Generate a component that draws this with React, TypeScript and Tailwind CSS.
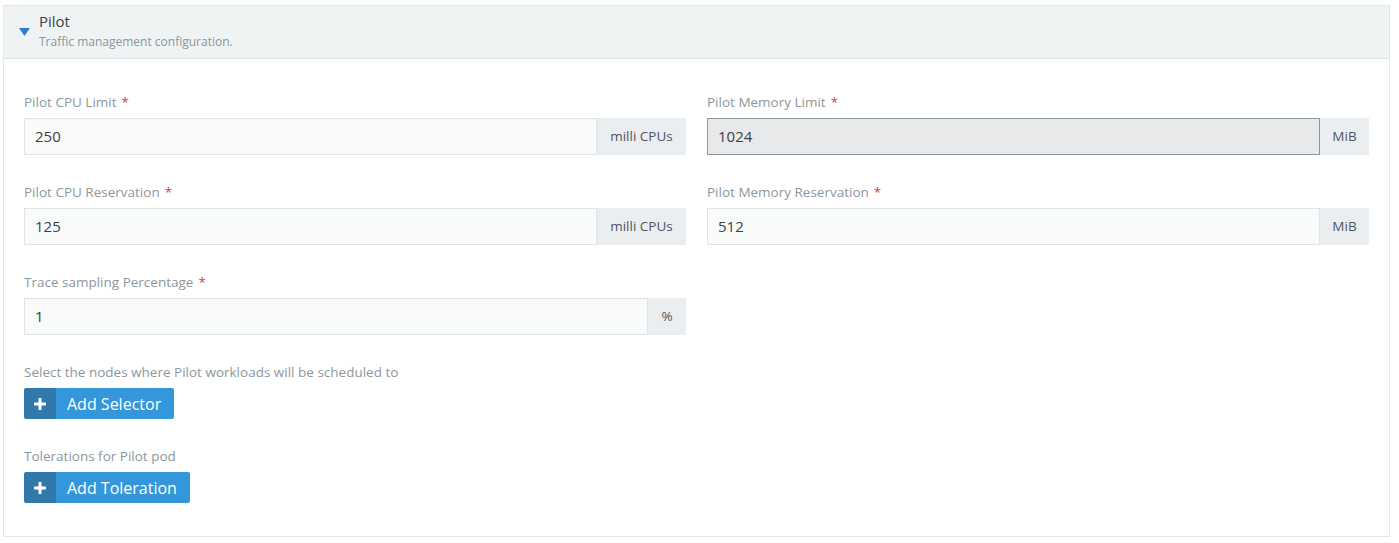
const Label = ({ text, required }: { text: string; required?: boolean }) => (
  <div className="h-[16px] mb-[8px] text-[13.5px] leading-[16px] text-[#8c979d]">
    {text}
    {required && <span className="ml-[5px] text-[#e0353d]">*</span>}
  </div>
);

const Field = ({
  label,
  value,
  addon,
  addonWidth,
  disabled,
}: {
  label: string;
  value: string;
  addon: string;
  addonWidth: string;
  disabled?: boolean;
}) => (
  <div>
    <Label text={label} required />
    <div className="flex h-[37px]">
      <input
        readOnly
        value={value}
        className={`flex-1 min-w-0 px-[10px] text-[15px] text-[#3c4047] outline-none border ${
          disabled ? 'bg-[#e8e9eb] border-[#8e979c]' : 'bg-[#f9fbfb] border-[#dfe4e6]'
        }`}
      />
      <div
        className={`${addonWidth} flex items-center justify-center bg-[#ebeef0] text-[13.5px] text-[#4f5560]`}
      >
        {addon}
      </div>
    </div>
  </div>
);

const AddButton = ({ text }: { text: string }) => (
  <button className="flex h-[31px] rounded-[2px] overflow-hidden text-white">
    <span className="w-[32px] flex items-center justify-center bg-[#3179ab]">
      <svg width="12" height="12" viewBox="0 0 12 12">
        <rect x="4.5" y="0" width="3" height="12" fill="white" />
        <rect x="0" y="4.5" width="12" height="3" fill="white" />
      </svg>
    </span>
    <span className="flex items-center bg-[#3497db] pl-[11px] pr-[13px] text-[16px]">{text}</span>
  </button>
);

export default function App() {
  return (
    <div className="bg-white min-h-screen pt-[5px] pl-[3px] pr-[9px] font-['Open_Sans','Noto_Sans',sans-serif]">
      <div className="border border-[#e3e7e9]">
        <div className="flex h-[53px] bg-[#f0f3f4] border-b border-[#dfe3e5]">
          <div className="w-[35px] pl-[15px] pt-[22px]">
            <svg width="11" height="8" viewBox="0 0 11 8">
              <polygon points="0,0 11,0 5.5,8" fill="#2f7ed0" />
            </svg>
          </div>
          <div className="pt-[5px]">
            <div className="text-[15px] leading-[20px] text-[#3e4248]">Pilot</div>
            <div className="mt-[3px] text-[12px] leading-[15px] text-[#8a969c]">
              Traffic management configuration.
            </div>
          </div>
        </div>
        <div className="px-[20px] pt-[35px] pb-[33px]">
          <div className="grid grid-cols-2 gap-x-[21px] gap-y-[29px]">
            <Field label="Pilot CPU Limit" value="250" addon="milli CPUs" addonWidth="w-[89px]" />
            <Field label="Pilot Memory Limit" value="1024" addon="MiB" addonWidth="w-[49px]" disabled />
            <Field label="Pilot CPU Reservation" value="125" addon="milli CPUs" addonWidth="w-[89px]" />
            <Field label="Pilot Memory Reservation" value="512" addon="MiB" addonWidth="w-[49px]" />
            <Field label="Trace sampling Percentage" value="1" addon="%" addonWidth="w-[38px]" />
          </div>
          <div className="mt-[29px]">
            <Label text="Select the nodes where Pilot workloads will be scheduled to" />
            <AddButton text="Add Selector" />
          </div>
          <div className="mt-[29px]">
            <Label text="Tolerations for Pilot pod" />
            <AddButton text="Add Toleration" />
          </div>
        </div>
      </div>
    </div>
  );
}
